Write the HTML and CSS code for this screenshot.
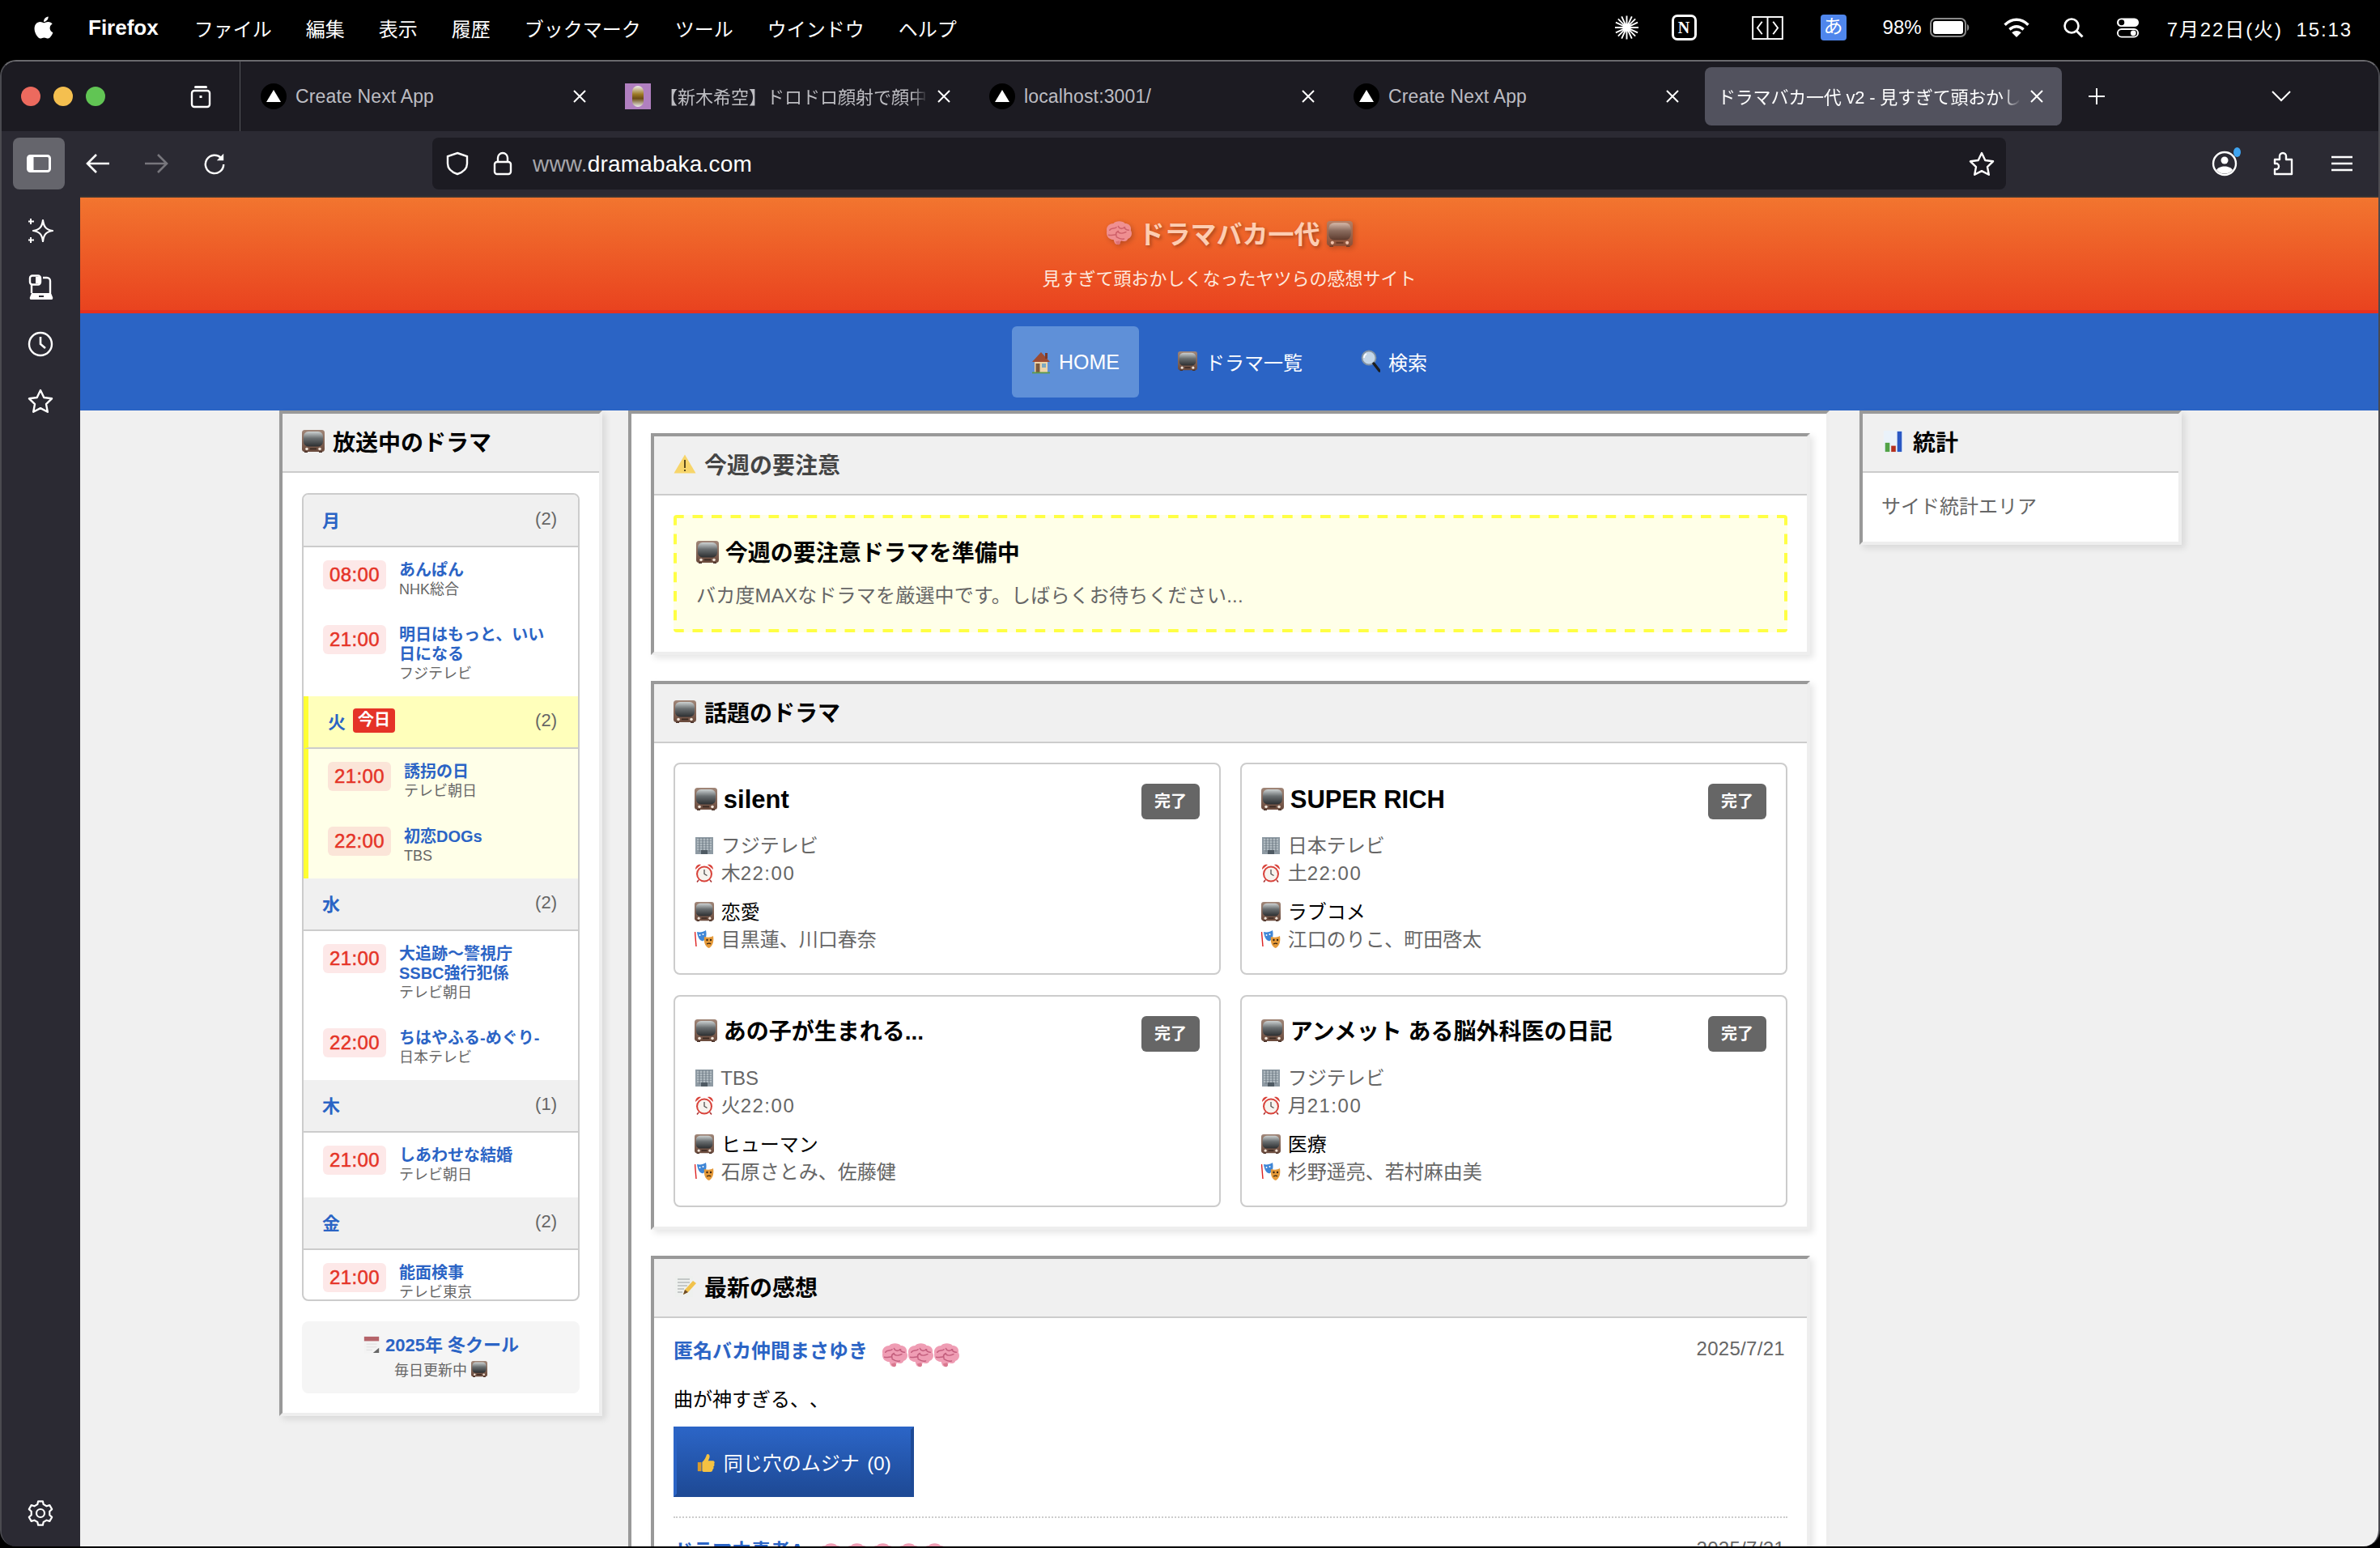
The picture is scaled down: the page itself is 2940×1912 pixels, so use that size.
FILE: index.html
```html
<!DOCTYPE html>
<html lang="ja">
<head>
<meta charset="utf-8">
<title>ドラマバカ一代</title>
<link rel="stylesheet" href="styles.css">
</head>
<body>
<svg class="defs" aria-hidden="true">
  <defs>
    <linearGradient id="scr" x1="0" y1="0" x2="0" y2="1"><stop offset="0" stop-color="#cdd2d2"/><stop offset=".45" stop-color="#6a6f71"/><stop offset="1" stop-color="#2c2e30"/></linearGradient>
    <linearGradient id="case" x1="0" y1="0" x2="0" y2="1"><stop offset="0" stop-color="#a08678"/><stop offset="1" stop-color="#6a4a3c"/></linearGradient>
    <symbol id="tv" viewBox="0 0 28 28">
      <rect x="0" y="0" width="28" height="27" rx="3.500" fill="url(#case)"/>
      <rect x="2" y="2" width="24" height="18.500" rx="6" fill="url(#scr)"/>
      <circle cx="6" cy="23.500" r="1.800" fill="#f0e2d6"/><circle cx="22" cy="23.500" r="1.800" fill="#f0e2d6"/>
      <rect x="10" y="22.500" width="8" height="1.800" fill="#3b2a22"/>
      <rect x="3" y="26.500" width="4" height="1.500" fill="#4a332a"/><rect x="21" y="26.500" width="4" height="1.500" fill="#4a332a"/>
    </symbol>
    <symbol id="brain" viewBox="3 3 27 26">
      <path d="M4 13c-1-5 3-8 7-8 2-3 10-3 12 0 4 0 7 3 6 7 2 3 1 8-3 9-1 3-5 3-7 2-1 1-1 4-4 4-3 0-3-3-4-5-4 0-8-3-7-9z" fill="#ef9db4"/>
      <path d="M7 12c2-3 5-1 7-3m-8 8c3 1 6-1 8 0m2-9c1 3 4 3 7 1m-7 5c2 2 6 1 8 0m-10 5c2 1 3 3 8 2m-6-8c-2 1-3 3-2 5m8-9c1 2 3 3 5 3" fill="none" stroke="#c45f7e" stroke-width="1.300" stroke-linecap="round"/>
      <path d="M13 24c1 2 2 4 4 3 2-1 1-3 0-4z" fill="#d9788f"/>
    </symbol>
    <symbol id="warn" viewBox="0 0 28 28">
      <path d="M14 2.500 27.500 25.500H.5z" fill="#f7d56a"/><rect x="13" y="9" width="2" height="10" fill="#5a4a1c"/><rect x="13" y="21" width="2" height="2" fill="#5a4a1c"/>
    </symbol>
    <symbol id="bld" viewBox="0 0 24 24">
      <rect x="1" y="2" width="22" height="21" fill="#8e9aa3"/>
      <path d="M3 5h18M3 8h18M3 11h18M3 14h18M3 17h18" stroke="#d4dbe0" stroke-width="1.200"/>
      <path d="M6 3v17M10 3v17M14 3v17M18 3v17" stroke="#6a7680" stroke-width="1"/>
      <rect x="8" y="18" width="8" height="5" fill="#4f5a63"/>
    </symbol>
    <symbol id="alarm" viewBox="0 0 24 24">
      <circle cx="12" cy="13.500" r="10" fill="#d8423a"/><circle cx="12" cy="13.500" r="8" fill="#f7f3ee"/>
      <path d="M12 8v5.500l3.500 2" fill="none" stroke="#444" stroke-width="1.200"/>
      <path d="M1 8c0-4 3-7 7-6zM23 8c0-4-3-7-7-6z" fill="#d8423a"/><path d="M5 21l-2 2.500M19 21l2 2.500" stroke="#a33" stroke-width="1.600"/>
    </symbol>
    <symbol id="mask" viewBox="0 0 24 24">
      <path d="M0.500 3 2 21" stroke="#d22" stroke-width="1.400" fill="none"/>
      <path d="M3 3c4 1 8 0 11-2 1 5 1 9-3 13-3 1-7-2-8-11z" fill="#3f86d6"/>
      <path d="M12 9c4 1 8 1 11-1 1 6 0 12-5 15-4-1-7-6-6-14z" fill="#e59a3a"/>
      <circle cx="15.500" cy="13" r="1.200" fill="#3a2410"/><circle cx="20" cy="13" r="1.200" fill="#3a2410"/><path d="M15 18c2-1 4-1 5 0" stroke="#3a2410" stroke-width="1.300" fill="none"/>
      <circle cx="6.500" cy="7" r="1" fill="#fff"/><circle cx="10.500" cy="6" r="1" fill="#fff"/>
    </symbol>
    <symbol id="house" viewBox="0 0 24 30">
      <rect x="4" y="13" width="16" height="15" fill="#edd3a8"/>
      <path d="M12 3 23 15H1z" fill="#9c4b32"/><rect x="17" y="4" width="3" height="7" fill="#7d3a28"/>
      <rect x="5.500" y="17" width="5" height="11" fill="#7c5a3c"/><rect x="13" y="17" width="5" height="5" fill="#7da9c2"/>
      <rect x="1" y="27.500" width="22" height="1.800" fill="#5c9a4a"/>
    </symbol>
    <symbol id="search" viewBox="0 0 24 30">
      <circle cx="10" cy="11" r="8.500" fill="#c3d6e8" stroke="#8494a4" stroke-width="1.800"/>
      <path d="M7 6c-2 1-3 3-3 5" stroke="#fff" stroke-width="1.600" fill="none"/>
      <path d="M16 18l7 9" stroke="#1d1d1d" stroke-width="3.400" stroke-linecap="round"/>
    </symbol>
    <symbol id="chart" viewBox="0 0 28 30">
      <rect x="1" y="1" width="26" height="28" fill="#eaf2fa"/>
      <rect x="3" y="17" width="6" height="12" fill="#52a246"/><rect x="11" y="21" width="6" height="8" fill="#b5301f"/><rect x="19" y="2" width="6" height="27" fill="#2a58c4"/>
    </symbol>
    <symbol id="memo" viewBox="0 0 28 28">
      <rect x="2" y="1" width="22" height="26" fill="#eef0ee"/>
      <path d="M5 5h15M5 9h15M5 13h12M5 17h8M5 21h6" stroke="#9aa0a0" stroke-width="1"/>
      <path d="M12 24l2-6L24 7l4 3-10 11z" fill="#f1c24b"/><path d="M12 24l2-6 4 3z" fill="#6b4a2a"/>
    </symbol>
    <symbol id="cal" viewBox="0 0 22 24">
      <rect x="1" y="1" width="20" height="22" fill="#f3f3f3"/><rect x="1" y="1" width="20" height="6" fill="#b5646a"/>
      <path d="M4 11h14M4 15h14M4 19h8" stroke="#ddd" stroke-width="1"/><path d="M13 23l8-7v7z" fill="#666"/>
    </symbol>
    <symbol id="thumb" viewBox="0 0 24 26">
      <path d="M1 12h5v12H1z" fill="#d99a2b"/>
      <path d="M7 12c3-3 5-6 6-10 1-2 4-1 4 2 0 2-1 4-2 6h6c3 0 3 3 2 4 1 2 0 3-1 4 1 2 0 3-1 4 0 2-1 3-3 3H10c-2 0-3-1-3-2z" fill="#f5c242"/>
    </symbol>
    <symbol id="tri" viewBox="0 0 32 32">
      <circle cx="16" cy="16" r="16" fill="#000"/><path d="M16 8l9 15H7z" fill="#fff"/>
    </symbol>
    <symbol id="x" viewBox="0 0 18 18"><path d="M2 2l14 14M16 2 2 16" stroke="#fff" stroke-width="2" fill="none"/></symbol>
  </defs>
</svg>

<header class="menubar">
  <div class="menu-left">
    <svg class="apple" viewBox="0 0 24 24"><path fill="#fff" d="M17.050 20.280c-.98.95-2.050.8-3.080.35-1.090-.46-2.090-.48-3.240 0-1.440.62-2.200.44-3.060-.35C2.790 15.250 3.510 7.590 9.050 7.310c1.350.07 2.290.74 3.080.8 1.180-.24 2.310-.93 3.570-.84 1.510.12 2.650.72 3.400 1.800-3.120 1.870-2.380 5.980.48 7.130-.57 1.500-1.310 2.990-2.540 4.090zM12.030 7.250c-.15-2.230 1.660-4.070 3.740-4.250.29 2.580-2.340 4.500-3.740 4.250z"/></svg>
    <span class="app">Firefox</span><span>ファイル</span><span>編集</span><span>表示</span><span>履歴</span><span>ブックマーク</span><span>ツール</span><span>ウインドウ</span><span>ヘルプ</span>
  </div>
  <div class="menu-right">
    <svg class="st burst" viewBox="0 0 32 32"><path d="M16 1v30M1 16h30M5 5l22 22M27 5 5 27M9.500 2l13 28M22.500 2l-13 28M2 9.500l28 13M30 9.500 2 22.500" stroke="#fff" stroke-width="2"/></svg>
    <span class="notion">N</span>
    <svg class="st dev wide" viewBox="0 0 40 30"><rect x="1" y="1" width="38" height="28" fill="none" stroke="#fff" stroke-width="2"/><path d="M20 1v28M13 7l-6 8 6 8M27 7l6 8-6 8" fill="none" stroke="#fff" stroke-width="2"/></svg>
    <span class="ime">あ</span>
    <span class="pct">98%</span>
    <svg class="st batt tight" viewBox="0 0 50 24"><rect x="1" y="1" width="43" height="22" rx="6" fill="none" stroke="#8a8a8a" stroke-width="2"/><rect x="4" y="4" width="37" height="16" rx="3" fill="#fff"/><path d="M46 8c3 1 3 7 0 8z" fill="#8a8a8a"/></svg>
    <svg class="st wifi" viewBox="0 0 34 26"><path d="M2 9c9-9 21-9 30 0" fill="none" stroke="#fff" stroke-width="3.600"/><path d="M8 15c6-5 12-5 18 0" fill="none" stroke="#fff" stroke-width="3.600"/><path d="M17 25l-6-6c4-3 8-3 12 0z" fill="#fff"/></svg>
    <svg class="st mag" viewBox="0 0 26 26"><circle cx="11" cy="11" r="8.500" fill="none" stroke="#fff" stroke-width="2.600"/><path d="M17 17l7.500 7.500" stroke="#fff" stroke-width="3"/></svg>
    <svg class="st cc" viewBox="0 0 30 26"><rect x="1" y="1" width="28" height="11" rx="5.500" fill="#fff"/><circle cx="7" cy="6.500" r="3.600" fill="#000"/><rect x="2" y="15" width="26" height="10" rx="5" fill="none" stroke="#fff" stroke-width="2"/><circle cx="22" cy="20" r="3.500" fill="#fff"/></svg>
    <span class="clock">7月22日(火) 15:13</span>
  </div>
</header>

<div class="window">
  <div class="tabstrip">
    <div class="traffic"><i class="dot red"></i><i class="dot yellow"></i><i class="dot green"></i></div>
    <div class="tabview">
      <svg class="ico32" viewBox="0 0 32 32"><rect x="8" y="3" width="16" height="3" rx="1.500" fill="#fff"/><rect x="5" y="9" width="22" height="20" rx="3" fill="none" stroke="#fff" stroke-width="2.400"/><rect x="14.500" y="15" width="3" height="3" fill="#fff"/></svg>
    </div>
    <div class="tabs">
      <div class="tab"><svg class="fav"><use href="#tri"/></svg><span class="tab-t wide-t">Create Next App</span><svg class="close"><use href="#x"/></svg></div>
      <div class="tab"><span class="fav fav-img"><i></i></span><span class="tab-t fade">【新木希空】ドロドロ顔射で顔中</span><svg class="close"><use href="#x"/></svg></div>
      <div class="tab"><svg class="fav"><use href="#tri"/></svg><span class="tab-t wide-t">localhost:3001/</span><svg class="close"><use href="#x"/></svg></div>
      <div class="tab"><svg class="fav"><use href="#tri"/></svg><span class="tab-t wide-t">Create Next App</span><svg class="close"><use href="#x"/></svg></div>
      <div class="tab active"><span class="tab-t fade">ドラマバカ一代 v2 - 見すぎて頭おかし</span><svg class="close"><use href="#x"/></svg></div>
    </div>
    <svg class="plus" viewBox="0 0 22 22"><path d="M11 1v20M1 11h20" stroke="#fff" stroke-width="2"/></svg>
    <svg class="chev" viewBox="0 0 24 14"><path d="M1 1l11 11L23 1" fill="none" stroke="#fff" stroke-width="2"/></svg>
  </div>

  <div class="toolbar">
    <div class="sidebtn"><svg viewBox="0 0 30 22"><rect x="1.500" y="1.500" width="27" height="19" rx="3" fill="none" stroke="#fff" stroke-width="3"/><rect x="1.500" y="1.500" width="7" height="19" fill="#fff"/></svg></div>
    <svg class="tb back" viewBox="0 0 30 26"><path d="M29 13H3M13 2 2 13l11 11" fill="none" stroke="#fff" stroke-width="2.600"/></svg>
    <svg class="tb fwd" viewBox="0 0 30 26"><path d="M1 13h26M17 2l11 11-11 11" fill="none" stroke="#77767c" stroke-width="2.600"/></svg>
    <svg class="tb reload" viewBox="0 0 30 30"><path d="M24 8a12 12 0 1 0 3 8" fill="none" stroke="#fff" stroke-width="2.600"/><path d="M27 2v9h-9z" fill="#fff"/></svg>
    <div class="urlbar">
      <svg class="shield" viewBox="0 0 30 30"><path d="M15 2l12 4v9c0 7-6 11-12 13C9 26 3 22 3 15V6z" fill="none" stroke="#fff" stroke-width="2.400"/></svg>
      <svg class="lock" viewBox="0 0 24 30"><rect x="2" y="13" width="20" height="15" rx="3" fill="none" stroke="#fff" stroke-width="2.400"/><path d="M6 13V8a6 6 0 0 1 12 0v5" fill="none" stroke="#fff" stroke-width="2.400"/></svg>
      <span class="url"><span class="url-dim">www.</span>dramabaka.com</span>
      <svg class="urlstar" viewBox="0 0 32 30"><path d="M16 2l4.300 9 9.700 1.300-7 6.800 1.800 9.700L16 24.100 7.200 28.800 9 19.100l-7-6.800L11.700 11z" fill="none" stroke="#fff" stroke-width="2.400" stroke-linejoin="round"/></svg>
    </div>
    <div class="acct"><svg viewBox="0 0 32 32"><circle cx="16" cy="16" r="14" fill="none" stroke="#fff" stroke-width="2.400"/><circle cx="16" cy="12" r="4.500" fill="#fff"/><path d="M6 24c3-6 17-6 20 0-5 6-15 6-20 0z" fill="#fff"/></svg><i class="badge-dot"></i></div>
    <svg class="ext" viewBox="0 0 28 30"><path d="M3 10h6V6a4 4 0 0 1 8 0v4h7v18H3v-6h3a4 4 0 0 0 0-7H3z" fill="none" stroke="#fff" stroke-width="2.400" stroke-linejoin="round"/></svg>
    <svg class="burger" viewBox="0 0 26 20"><path d="M0 2h26M0 10h26M0 18h26" stroke="#fff" stroke-width="2.600"/></svg>
  </div>

  <div class="browser">
    <aside class="side">
      <svg class="si" viewBox="0 0 32 32"><path d="M19 3c1 8 4 12 12 13-8 1-11 5-12 13-1-8-4-12-12-13 8-1 11-5 12-13z" fill="none" stroke="#fff" stroke-width="2.200" stroke-linejoin="round"/><path d="M4 1v7M1 4.500h7M4 24v7M1 27.500h7" stroke="#fff" stroke-width="2"/></svg>
      <svg class="si" viewBox="0 0 32 32"><rect x="3" y="1.500" width="13" height="11" rx="3" fill="none" stroke="#fff" stroke-width="2.400"/><rect x="10" y="3" width="5" height="8" fill="#fff"/><path d="M19 4h5a4 4 0 0 1 4 4v15M5 13v10" fill="none" stroke="#fff" stroke-width="2.400"/><path d="M5 23h24l2 5a2 2 0 0 1-2 3H5a2 2 0 0 1-2-3z" fill="#fff"/><rect x="14" y="26" width="6" height="2" fill="#2b2a33"/></svg>
      <svg class="si" viewBox="0 0 32 32"><circle cx="16" cy="16" r="14" fill="none" stroke="#fff" stroke-width="2.400"/><path d="M16 7v9l6 5" fill="none" stroke="#fff" stroke-width="2.600"/></svg>
      <svg class="si" viewBox="0 0 32 30"><path d="M16 2l4.300 9 9.700 1.300-7 6.800 1.800 9.700L16 24.100 7.200 28.800 9 19.100l-7-6.800L11.700 11z" fill="none" stroke="#fff" stroke-width="2.400" stroke-linejoin="round"/></svg>
      <svg class="si gear" viewBox="0 0 32 32"><path d="M13.140 1.280 18.860 1.280 19.740 5.130 23.540 7.320 27.320 6.160 30.180 11.120 27.290 13.810 27.290 18.190 30.180 20.880 27.320 25.840 23.540 24.680 19.740 26.870 18.860 30.720 13.140 30.720 12.260 26.870 8.460 24.680 4.680 25.840 1.820 20.880 4.710 18.190 4.710 13.810 1.820 11.120 4.680 6.160 8.460 7.320 12.260 5.130z" fill="none" stroke="#fff" stroke-width="2.200" stroke-linejoin="round"/><circle cx="16" cy="16" r="5" fill="none" stroke="#fff" stroke-width="2.200"/></svg>
    </aside>

    <div class="page">
      <div class="site-head">
        <h1 class="site-title"><svg class="e"><use href="#brain"/></svg> ドラマバカ一代 <svg class="e"><use href="#tv"/></svg></h1>
        <p class="site-sub">見すぎて頭おかしくなったヤツらの感想サイト</p>
      </div>
      <nav class="site-nav">
        <a class="nav-link current"><svg class="e"><use href="#house"/></svg> HOME</a>
        <a class="nav-link"><svg class="e"><use href="#tv"/></svg> ドラマ一覧</a>
        <a class="nav-link"><svg class="e"><use href="#search"/></svg> 検索</a>
      </nav>

      <div class="columns">
        <aside class="box col-left">
          <h2 class="box-head"><svg class="e"><use href="#tv"/></svg> 放送中のドラマ</h2>
          <div class="box-body">
            <div class="days">
              <div class="day-head"><span class="day">月</span><span class="count">(2)</span></div>
              <div class="show"><span class="time">08:00</span><div class="show-info"><div class="show-name">あんぱん</div><div class="show-net">NHK総合</div></div></div>
              <div class="show"><span class="time">21:00</span><div class="show-info"><div class="show-name">明日はもっと、いい日になる</div><div class="show-net">フジテレビ</div></div></div>

              <div class="day-head today"><span class="day">火</span><span class="today-tag">今日</span><span class="count">(2)</span></div>
              <div class="show today-show"><span class="time">21:00</span><div class="show-info"><div class="show-name">誘拐の日</div><div class="show-net">テレビ朝日</div></div></div>
              <div class="show today-show"><span class="time">22:00</span><div class="show-info"><div class="show-name">初恋DOGs</div><div class="show-net">TBS</div></div></div>

              <div class="day-head"><span class="day">水</span><span class="count">(2)</span></div>
              <div class="show"><span class="time">21:00</span><div class="show-info"><div class="show-name">大追跡〜警視庁<span class="keep">SSBC強行犯係</span></div><div class="show-net">テレビ朝日</div></div></div>
              <div class="show"><span class="time">22:00</span><div class="show-info"><div class="show-name">ちはやふる-めぐり-</div><div class="show-net">日本テレビ</div></div></div>

              <div class="day-head"><span class="day">木</span><span class="count">(1)</span></div>
              <div class="show"><span class="time">21:00</span><div class="show-info"><div class="show-name">しあわせな結婚</div><div class="show-net">テレビ朝日</div></div></div>

              <div class="day-head"><span class="day">金</span><span class="count">(2)</span></div>
              <div class="show"><span class="time">21:00</span><div class="show-info"><div class="show-name">能面検事</div><div class="show-net">テレビ東京</div></div></div>
            </div>
            <div class="season">
              <div class="season-name"><svg class="e"><use href="#cal"/></svg> 2025年 冬クール</div>
              <div class="season-note">毎日更新中 <svg class="e"><use href="#tv"/></svg></div>
            </div>
          </div>
        </aside>

        <main class="col-main">
          <section class="box sec">
            <h2 class="box-head muted"><svg class="e"><use href="#warn"/></svg> 今週の要注意</h2>
            <div class="box-body">
              <div class="notice">
                <h3 class="notice-title"><svg class="e"><use href="#tv"/></svg> 今週の要注意ドラマを準備中</h3>
                <p class="notice-text">バカ度MAXなドラマを厳選中です。しばらくお待ちください...</p>
              </div>
            </div>
          </section>

          <section class="box sec">
            <h2 class="box-head"><svg class="e"><use href="#tv"/></svg> 話題のドラマ</h2>
            <div class="box-body cards">
              <article class="card">
                <div class="card-top"><h3 class="card-title"><svg class="e"><use href="#tv"/></svg> <span class="lat">silent</span></h3><span class="tag">完了</span></div>
                <div class="meta"><div><svg class="e"><use href="#bld"/></svg> フジテレビ</div><div><svg class="e"><use href="#alarm"/></svg> 木<span class="num">22:00</span></div></div>
                <div class="meta meta2"><div class="genre"><svg class="e"><use href="#tv"/></svg> 恋愛</div><div><svg class="e"><use href="#mask"/></svg> 目黒蓮、川口春奈</div></div>
              </article>
              <article class="card">
                <div class="card-top"><h3 class="card-title"><svg class="e"><use href="#tv"/></svg> <span class="lat">SUPER RICH</span></h3><span class="tag">完了</span></div>
                <div class="meta"><div><svg class="e"><use href="#bld"/></svg> 日本テレビ</div><div><svg class="e"><use href="#alarm"/></svg> 土<span class="num">22:00</span></div></div>
                <div class="meta meta2"><div class="genre"><svg class="e"><use href="#tv"/></svg> ラブコメ</div><div><svg class="e"><use href="#mask"/></svg> 江口のりこ、町田啓太</div></div>
              </article>
              <article class="card">
                <div class="card-top"><h3 class="card-title"><svg class="e"><use href="#tv"/></svg> あの子が生まれる...</h3><span class="tag">完了</span></div>
                <div class="meta"><div><svg class="e"><use href="#bld"/></svg> TBS</div><div><svg class="e"><use href="#alarm"/></svg> 火<span class="num">22:00</span></div></div>
                <div class="meta meta2"><div class="genre"><svg class="e"><use href="#tv"/></svg> ヒューマン</div><div><svg class="e"><use href="#mask"/></svg> 石原さとみ、佐藤健</div></div>
              </article>
              <article class="card">
                <div class="card-top"><h3 class="card-title"><svg class="e"><use href="#tv"/></svg> アンメット ある脳外科医の日記</h3><span class="tag">完了</span></div>
                <div class="meta"><div><svg class="e"><use href="#bld"/></svg> フジテレビ</div><div><svg class="e"><use href="#alarm"/></svg> 月<span class="num">21:00</span></div></div>
                <div class="meta meta2"><div class="genre"><svg class="e"><use href="#tv"/></svg> 医療</div><div><svg class="e"><use href="#mask"/></svg> 杉野遥亮、若村麻由美</div></div>
              </article>
            </div>
          </section>

          <section class="box sec">
            <h2 class="box-head"><svg class="e"><use href="#memo"/></svg> 最新の感想</h2>
            <div class="box-body">
              <div class="comment">
                <div class="comment-top"><div class="comment-who"><span class="author">匿名バカ仲間まさゆき</span><span class="brains"><svg class="e"><use href="#brain"/></svg><svg class="e"><use href="#brain"/></svg><svg class="e"><use href="#brain"/></svg></span></div><span class="date">2025/7/21</span></div>
                <p class="comment-text">曲が神すぎる、、</p>
                <button class="same"><svg class="e"><use href="#thumb"/></svg> 同じ穴のムジナ (0)</button>
              </div>
              <div class="comment">
                <div class="comment-top"><div class="comment-who"><span class="author">ドラマ中毒者A</span><span class="brains"><svg class="e"><use href="#brain"/></svg><svg class="e"><use href="#brain"/></svg><svg class="e"><use href="#brain"/></svg><svg class="e"><use href="#brain"/></svg><svg class="e"><use href="#brain"/></svg></span></div><span class="date">2025/7/21</span></div>
              </div>
            </div>
          </section>
        </main>

        <aside class="box col-right">
          <h2 class="box-head"><svg class="e"><use href="#chart"/></svg> 統計</h2>
          <div class="box-body"><p class="stat-text">サイド統計エリア</p></div>
        </aside>
      </div>
    </div>
  </div>
</div>
</body>
</html>
```

FILE: styles.css
```css
* { box-sizing: border-box; }
html, body { margin: 0; height: 1912px; overflow: hidden; background: #000; text-spacing-trim: space-all; }
body { font-family: "Liberation Sans", "Noto Sans CJK JP", sans-serif; color: #000; font-size: 24px; }
h1, h2, h3, p { margin: 0; }
.defs { display: block; width: 0; height: 0; }
.e { display: inline-block; width: 1em; height: 1em; vertical-align: -0.12em; }

/* menu bar */
.menubar { height: 74px; display: flex; justify-content: space-between; align-items: center; color: #fff; padding: 0 34px 6px 36px; font-size: 24px; }
.menu-left { display: flex; align-items: center; gap: 42px; }
.apple { width: 36px; height: 36px; margin-right: -5px; }
.app { font-weight: 700; font-size: 26px; margin-right: 2px; }
.menu-right { display: flex; align-items: center; gap: 40px; }
.st { display: block; height: 32px; }
.burst { width: 31px; }
.notion { width: 31px; height: 32px; border: 3px solid #fff; border-radius: 7px; font: 700 20px/26px "Liberation Serif", serif; text-align: center; }
.dev { width: 39px; height: 29px; }
.wide { margin-left: 28px; }
.ime { width: 32px; height: 32px; margin-left: 6px; background: #4f86ec; border-radius: 4px; text-align: center; line-height: 30px; font-size: 24px; }
.pct { margin-left: 5px; }
.batt { width: 50px; height: 24px; }
.tight { margin-left: -30px; }
.wifi { width: 34px; height: 25px; }
.mag { width: 26px; height: 26px; }
.cc { width: 29px; height: 26px; }
.clock { margin-left: -6px; letter-spacing: 1.900px; word-spacing: 8px; }

/* window */
.window { height: 1836px; border-radius: 20px; border-top: 2px solid #6a6a6e; border-left: 2px solid #4a4a50; border-right: 2px solid #4a4a50; overflow: hidden; background: #1c1b22; }
.tabstrip { height: 86px; display: flex; align-items: center; background: #1c1b22; }
.traffic { display: flex; gap: 16px; padding-left: 24px; width: 227px; }
.dot { width: 24px; height: 24px; border-radius: 50%; display: block; }
.red { background: #ec6a5e; } .yellow { background: #f4bf4f; } .green { background: #61c554; }
.tabview { width: 68px; height: 86px; border-right: 1px solid #55555a; display: flex; align-items: center; }
.ico32 { width: 32px; height: 32px; margin-left: 3px; }
.tabs { display: flex; gap: 9px; margin-left: 9px; }
.tab { width: 441px; height: 72px; display: flex; align-items: center; padding: 0 22px 0 16px; gap: 11px; border-radius: 8px; color: #bdbdc2; font-size: 22px; }
.tab-t { flex: 1; white-space: nowrap; overflow: hidden; }
.wide-t { font-size: 23px; letter-spacing: .15px; }
.fade { padding-bottom: 2px; -webkit-mask-image: linear-gradient(90deg, #000 94%, transparent); mask-image: linear-gradient(90deg, #000 94%, transparent); }
.fav { width: 32px; height: 32px; flex: none; }
.fav-img { display: flex; align-items: center; justify-content: center; background: #b07fc0; }
.fav-img i { display: block; width: 14px; height: 26px; border-radius: 7px; background: linear-gradient(#eee, #9c7a25 40%, #6b4c14 60%, #eee); }
.close { width: 18px; height: 18px; flex: none; }
.active { background: #52525e; color: #fff; }
.active .tab-t { letter-spacing: -.2px; }
.plus { width: 22px; height: 22px; margin-left: 32px; }
.chev { width: 24px; height: 14px; margin-left: 205px; }

/* toolbar */
.toolbar { height: 80px; background: #2b2a33; display: flex; align-items: center; padding-left: 14px; }
.sidebtn { width: 64px; height: 64px; border-radius: 8px; background: #65656c; display: flex; align-items: center; justify-content: center; }
.sidebtn svg { width: 30px; height: 22px; }
.tb { width: 30px; height: 28px; }
.back { margin-left: 26px; }
.fwd { margin-left: 42px; }
.reload { margin-left: 42px; }
.urlbar { width: 1944px; height: 64px; margin-left: 254px; background: #1c1b22; border-radius: 8px; display: flex; align-items: center; padding: 0 14px 0 16px; color: #fff; font-size: 28px; }
.shield { width: 30px; height: 30px; }
.lock { width: 24px; height: 30px; margin-left: 29px; }
.url { margin-left: 25px; flex: 1; letter-spacing: .2px; padding-top: 2px; }
.url-dim { color: #a6a6ab; }
.urlstar { width: 32px; height: 30px; }
.acct { position: relative; width: 32px; height: 32px; margin-left: 254px; }
.acct svg { width: 32px; height: 32px; display: block; }
.badge-dot { position: absolute; right: -4px; top: -4px; width: 9px; height: 12px; border-radius: 50%; background: #3fa4f0; }
.ext { width: 28px; height: 30px; margin-left: 43px; }
.burger { width: 26px; height: 20px; margin-left: 45px; }

/* browser */
.browser { display: flex; height: 1668px; }
.side { width: 97px; flex: none; background: #2b2a33; display: flex; flex-direction: column; align-items: flex-start; padding: 27px 0 25px 32px; gap: 38px; }
.si { width: 32px; height: 32px; display: block; flex: none; }
.gear { margin-top: auto; }
.page { flex: 1; min-width: 0; background: #f0f0f0; border-top: 2px solid #3a3432; overflow: hidden; }

.site-head { height: 143px; padding-top: 23px; text-align: center; background: linear-gradient(#f2752f, #e9431f); border-bottom: 4px solid #e6301f; color: #fff; }
.site-title { font-size: 32px; line-height: 46px; font-weight: 700; color: #fdcdb2; text-shadow: 2px 2px 4px rgba(0,0,0,.3); }
.site-title .e { opacity: .75; filter: drop-shadow(2px 2px 3px rgba(0,0,0,.3)); }
.site-sub { margin-top: 15px; font-size: 22px; line-height: 33px; color: #fde9de; }
.site-nav { height: 120px; background: #2b64c5; display: flex; justify-content: center; align-items: center; gap: 24px; }
.nav-link { height: 88px; display: flex; align-items: center; gap: 10px; padding: 0 24px 2px; color: #fff; font-size: 24px; border-radius: 6px; white-space: nowrap; }
.nav-link .e { height: 30px; vertical-align: 0; }
.current { background: #5f90d8; font-size: 25px; padding-bottom: 0; }
.current .e { width: 24px; }

.columns { display: flex; align-items: stretch; padding-left: 246px; }
.box { background: #fff; border: 4px solid; border-color: #999 #eee #eee #999; box-shadow: 4px 4px 8px rgba(0,0,0,.1); }
.box-head { height: 73px; display: flex; align-items: center; gap: 10px; padding: 0 24px 3px; background: #f0f0f0; border-bottom: 2px solid #ccc; font-size: 28px; font-weight: 700; white-space: nowrap; }
.muted { color: #444; }
.box-body { padding: 24px; }

.col-left { width: 399px; flex: none; align-self: flex-start; }
.col-main { width: 1484px; flex: none; margin-left: 32px; height: 1500px; padding: 24px 24px 24px 24px; background: #fff; border: 4px solid; border-color: #999 #eee #eee #999; }
.col-right { width: 398px; flex: none; margin-left: 37px; align-self: flex-start; }
.stat-text { color: #666; font-size: 24px; line-height: 34px; padding: 3px 0; }
.col-right .box-body { padding: 22px 24px 23px 23px; }
.col-left .box-body { padding: 25px 24px 24px; }

/* day list */
.days { height: 998px; overflow: hidden; border: 2px solid #ccc; border-radius: 8px; }
.day-head { height: 65px; display: flex; align-items: center; padding: 0 26px 4px 23px; background: #f0f0f0; border-bottom: 2px solid #ccc; font-size: 22px; }
.day { color: #2b64c5; font-weight: 700; }
.count { margin-left: auto; color: #666; }
.today { background: #ffffbb; border-left: 6px solid #ffff33; padding-left: 24px; }
.today-tag { margin-left: 9px; width: 52px; height: 30px; background: #e53327; color: #fff; border-radius: 4px; font-size: 20px; font-weight: 700; text-align: center; line-height: 29px; }
.show { display: flex; align-items: flex-start; gap: 16px; padding: 16px 24px 16px 24px; }
.today-show { background: #ffffe8; border-left: 6px solid #ffff33; }
.today-show .time { background: #fbe5d8; }
.time { flex: none; width: 78px; height: 36px; background: #fde8e8; color: #e53327; border-radius: 6px; font-size: 24px; letter-spacing: .4px; -webkit-text-stroke: .5px #e53327; text-align: center; line-height: 35px; }
.show-info { min-width: 0; }
.show-name { color: #2b64c5; font-size: 20px; line-height: 24px; font-weight: 700; }
.keep { white-space: nowrap; }
.show-net { color: #666; font-size: 18px; line-height: 24px; }
.season { margin-top: 25px; height: 89px; padding-top: 15px; background: #f5f5f5; border-radius: 8px; text-align: center; }
.season-name { color: #2b64c5; font-size: 22px; line-height: 30px; font-weight: 700; }
.season-note { color: #666; font-size: 18px; line-height: 30px; margin-top: 1px; }
.season-note .e { font-size: 20px; }

/* main */
.sec { margin-bottom: 32px; margin-right: -4px; }
.notice { height: 145px; padding: 29px 28px 0; border-radius: 4px;
  background:
    linear-gradient(90deg, #ffff44 13px, transparent 13px) 0 0 / 23.500px 4px repeat-x,
    linear-gradient(90deg, #ffff44 13px, transparent 13px) 0 100% / 23.500px 4px repeat-x,
    linear-gradient(#ffff44 13px, transparent 13px) 0 0 / 4px 23.500px repeat-y,
    linear-gradient(#ffff44 13px, transparent 13px) 100% 0 / 4px 23.500px repeat-y,
    #ffffe8; }
.notice-title { font-size: 28px; line-height: 38px; font-weight: 700; white-space: nowrap; }
.notice-text { margin-top: 16px; color: #666; font-size: 24px; line-height: 34px; letter-spacing: .2px; white-space: nowrap; }
.cards { display: grid; grid-template-columns: 1fr 1fr; gap: 25px 24px; }
.card { height: 262px; padding: 24px; border: 2px solid #ccc; border-radius: 8px; background: #fff; }
.card-top { height: 44px; display: flex; justify-content: space-between; align-items: flex-start; }
.card-title { font-size: 28px; line-height: 40px; font-weight: 700; white-space: nowrap; }
.lat { font-size: 31px; }
.tag { width: 72px; height: 44px; background: #666; color: #fff; border-radius: 6px; font-size: 20px; font-weight: 700; text-align: center; line-height: 44px; flex: none; }
.meta { margin-top: 16px; color: #666; font-size: 24px; line-height: 34px; white-space: nowrap; }
.meta .e { margin-right: 2px; }
.num { letter-spacing: 1.500px; }
.meta2 { margin-top: 14px; }
.genre { color: #000; }

.comment { padding-bottom: 24px; margin-bottom: 24px; border-bottom: 2px dotted #ccc; }
.comment-top { display: flex; justify-content: space-between; align-items: flex-start; height: 60px; }
.comment-who { display: flex; gap: 17px; align-items: flex-start; }
.author { color: #2b64c5; font-size: 24px; line-height: 34px; font-weight: 700; white-space: nowrap; }
.brains { display: flex; padding-top: 7px; font-size: 32px; }
.date { color: #666; font-size: 24px; line-height: 28px; letter-spacing: .3px; margin-right: 3px; }
.comment-text { font-size: 24px; line-height: 34px; }
.same { display: block; margin-top: 16px; width: 297px; height: 87px; padding: 0 0 0 24px; text-align: left; font-family: inherit; font-size: 24px; word-spacing: 3px; color: #fff; background: linear-gradient(#2b64c5, #1e4a96); border: 4px solid; border-color: #2b64c5 #1e4a96 #1e4a96 #2b64c5; white-space: nowrap; }
```
